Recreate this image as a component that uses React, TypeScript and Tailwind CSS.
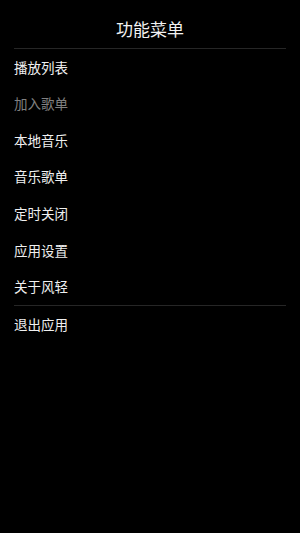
import React from "react";

const items: { label: string; disabled?: boolean }[] = [
  { label: "播放列表" },
  { label: "加入歌单", disabled: true },
  { label: "本地音乐" },
  { label: "音乐歌单" },
  { label: "定时关闭" },
  { label: "应用设置" },
  { label: "关于风轻" },
];

export default function App() {
  return (
    <div
      className="w-[300px] h-[533px] bg-black text-white overflow-hidden"
      style={{ fontFamily: '"Noto Sans CJK SC", "Noto Sans", sans-serif' }}
    >
      <div className="h-[48px] flex items-center justify-center pt-[9px] text-[17px] leading-none text-[#f2f2f2]">
        功能菜单
      </div>
      <div className="mx-[14px] h-px bg-[#262626]" />
      <div className="flex flex-col">
        {items.map((it) => (
          <div
            key={it.label}
            className={`h-[36.6px] flex items-center px-[14px] text-[13.5px] leading-none ${
              it.disabled ? "text-[#808080]" : "text-[#f0f0f0]"
            }`}
          >
            {it.label}
          </div>
        ))}
      </div>
      <div className="mx-[14px] h-px bg-[#262626]" />
      <div className="h-[36.6px] flex items-center px-[14px] text-[13.5px] leading-none text-[#f0f0f0]">
        退出应用
      </div>
    </div>
  );
}
